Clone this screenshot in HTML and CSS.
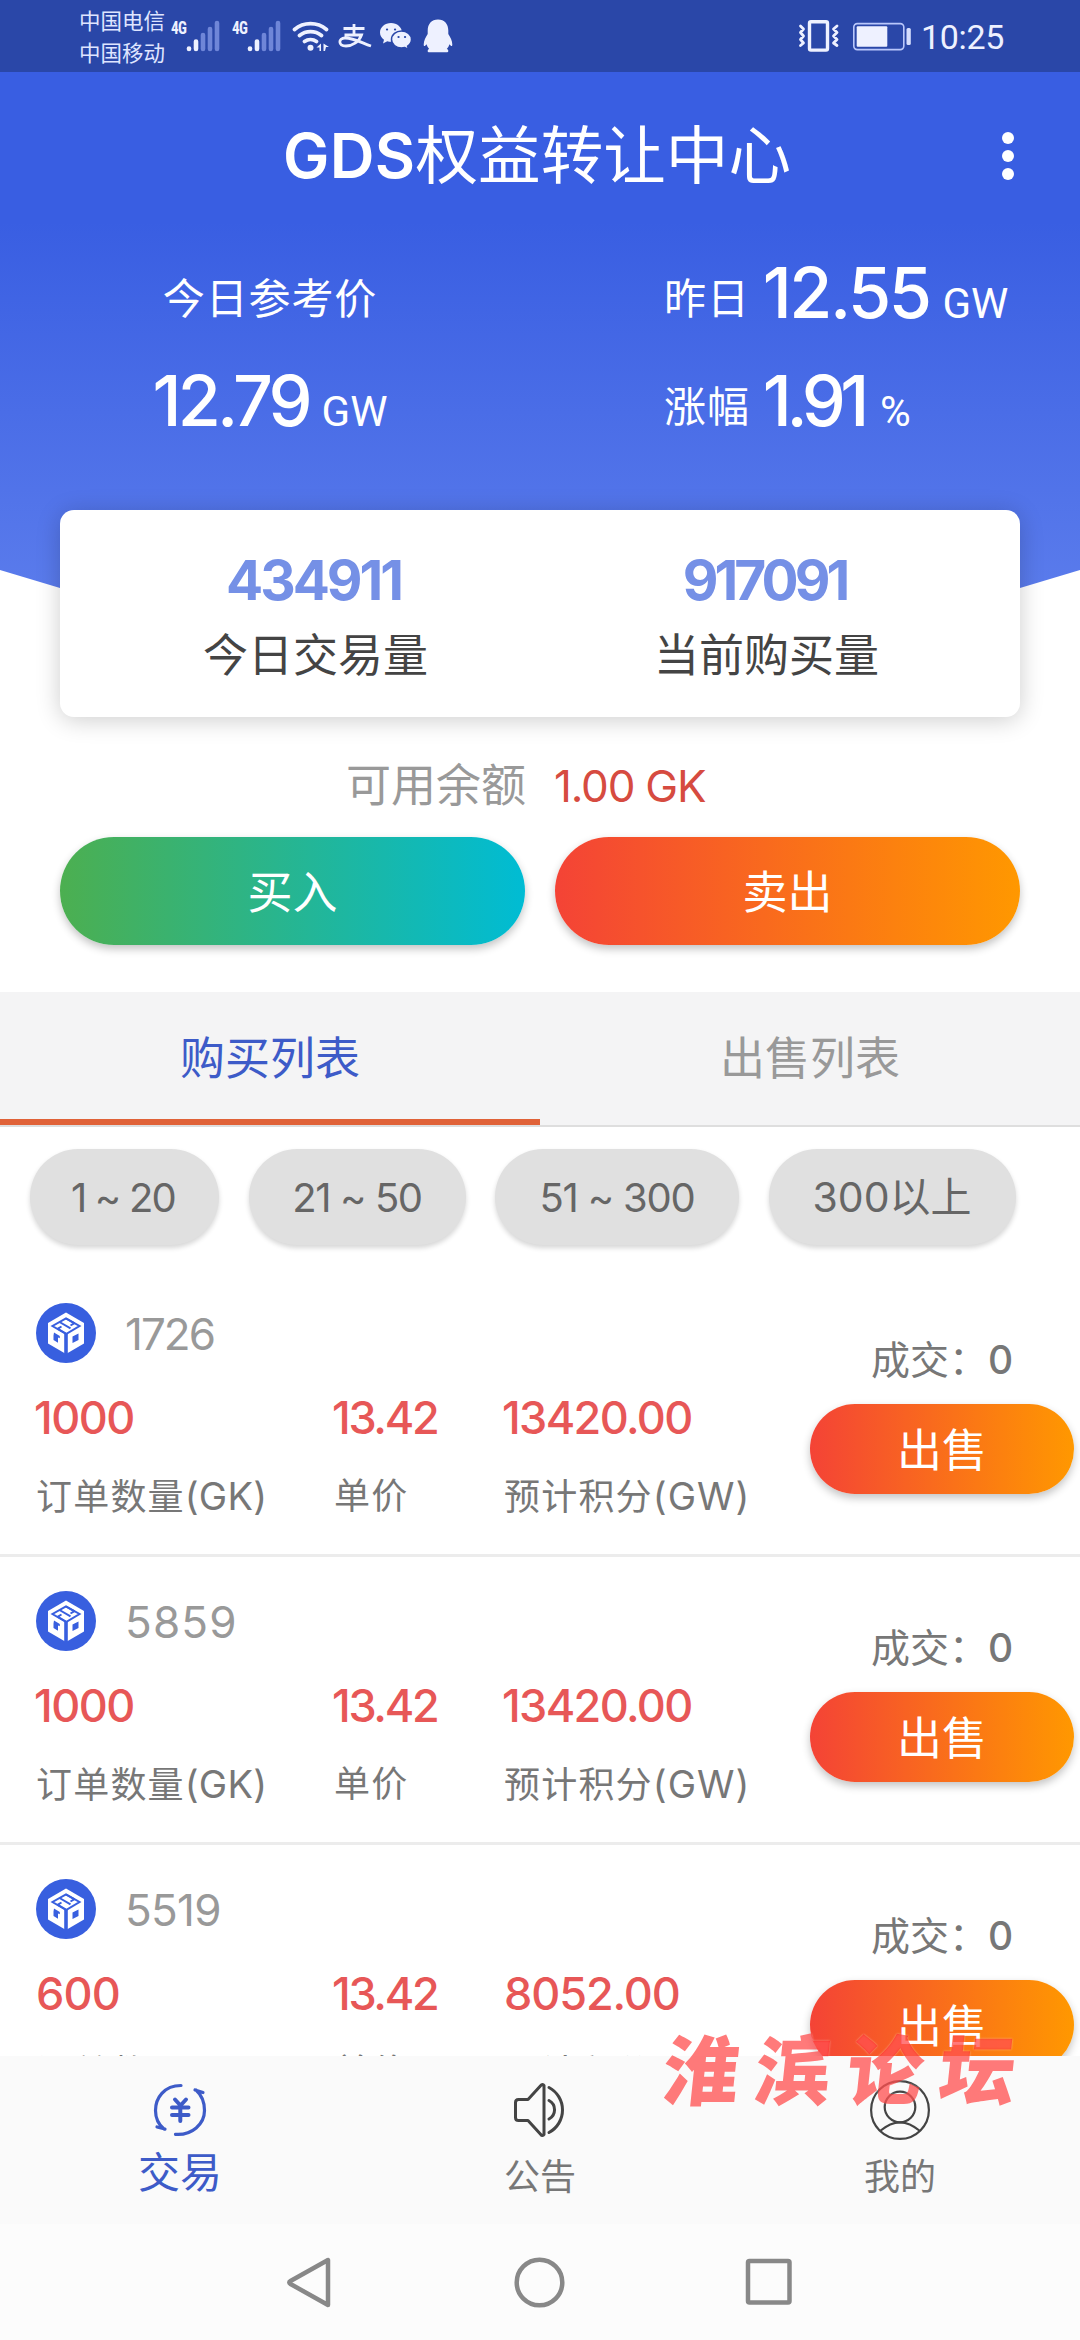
FILE: index.html
```html
<!DOCTYPE html>
<html lang="zh-CN">
<head>
<meta charset="utf-8">
<title>GDS权益转让中心</title>
<link rel="stylesheet" href="styles.css">
</head>
<body>
<svg class="defs" width="0" height="0">
  <symbol id="logo" viewBox="0 0 60 60">
    <circle cx="30" cy="30" r="30" fill="#385fdf"/>
    <path d="M30 9.500 48 20V40.500L30 51 12 40.500V20Z" fill="#fff"/>
    <g fill="none" stroke="#385fdf" stroke-width="2">
      <path d="M30 31 16.500 23 30 15.300 43.500 23Z"/>
      <path d="M23.500 19l11 6.300M25.500 23.500l-4 2.300M34.500 22.500l4-2.300M30 15.500l8.500 4.800M30 30.500l-8.500-4.800"/>
      <path d="M30 31V51" stroke-width="3.600"/>
    </g>
    <path d="M18 29.500 23.800 33v2.200l-1.800-.8v5.300L17.500 37v-4.500ZM36.500 33.500l6-3v6.500l-6 3Z" fill="#385fdf"/>
  </symbol>
</svg>

<div class="screen">
  <div class="statusbar">
    <div class="carriers"><div>中国电信</div><div>中国移动</div></div>
    <div class="signal"><span>4G</span>
      <svg width="36" height="72" viewBox="0 0 36 72" stroke="#eef1ff" stroke-width="4.600" stroke-linecap="round"><path d="M3 48.500v.5M10 41.500v7.500"/><path d="M17 35v14M24 29v20M31 23v26" stroke="#6f86d8"/></svg>
    </div>
    <div class="signal"><span>4G</span>
      <svg width="36" height="72" viewBox="0 0 36 72" stroke="#eef1ff" stroke-width="4.600" stroke-linecap="round"><path d="M3 48.500v.5M10 41.500v7.500"/><path d="M17 35v14M24 29v20M31 23v26" stroke="#6f86d8"/></svg>
    </div>
    <svg class="wifi" width="38" height="72" viewBox="291 0 38 72" fill="none" stroke="#eef1ff" stroke-width="3.700" stroke-linecap="round">
      <path d="M293.500 29.500A25 25 0 0 1 325.500 29.500M298.500 35.500A17.500 17.500 0 0 1 320.500 35.500M303.500 41.500A10 10 0 0 1 315.500 41.500"/>
      <circle cx="309.500" cy="47.800" r="3" fill="#eef1ff" stroke="none"/>
      <path d="M315.500 47.500l4.500-4v7.500h-1.500v-3.500ZM322.500 43.500l5.500 3.500h-3l-1 4h-1.500Z" fill="#eef1ff" stroke="none"/>
    </svg>
    <svg class="alipay" width="34" height="72" viewBox="337 0 34 72" fill="none" stroke="#eef1ff" stroke-width="2.800">
      <path d="M342.500 28.500h21M353 24v10.500M343.500 35h17C358 42 351 46 345 46c-8 0-8-8-1-8 9 0 17 5 26 8"/>
    </svg>
    <svg class="wechat" width="32" height="72" viewBox="379 0 32 72">
      <path fill="#eef1ff" d="M390 23c-6 0-11 4.200-11 9.500 0 3 1.500 5.500 4 7.300l-1 3.700 4.300-2.200c1.200.4 2.500.5 3.700.5 6 0 11-4 11-9.300S396 23 390 23Z"/>
      <path fill="#eef1ff" stroke="#2a47a8" stroke-width="1.500" d="M400.500 31c-5.400 0-10 3.700-10 8.500s4.500 8.500 10 8.500c1.200 0 2.300-.2 3.300-.5l3.700 1.900-.9-3.200c2.400-1.600 3.900-4 3.900-6.700 0-4.800-4.600-8.500-10-8.500Z"/>
      <path stroke="#2a47a8" stroke-width="2.200" stroke-linecap="round" d="M386 29.500h.1M394 29.500h.1M397.500 37h.1M404 37h.1"/>
    </svg>
    <svg class="qq" width="30" height="72" viewBox="422 0 30 72" fill="#eef1ff">
      <path d="M437 19.500c-6.500 0-10.300 4.500-10.300 11v3.500c-2 3-4 7-4 10.500 0 2 1.200 2.200 2.800-.2.500 1.800 1.400 3.300 2.700 4.600-2 .8-2.200 3.300.3 3.300h17c2.500 0 2.300-2.500.3-3.300 1.300-1.300 2.200-2.800 2.700-4.600 1.600 2.400 2.800 2.200 2.800.2 0-3.500-2-7.500-4-10.500v-3.500c0-6.500-3.800-11-10.300-11Z"/>
    </svg>
    <span class="spacer"></span>
    <svg width="42" height="72" viewBox="797 0 42 72" fill="none" stroke="#eef1ff" stroke-width="3.400" stroke-linejoin="round" stroke-linecap="round">
      <rect x="808.500" y="21.700" width="18" height="28.400" rx="1.500"/>
      <path stroke-width="2.800" d="M799.500 26l3 3-3 3.500 3 3.500-3 3.500 3 3.500-3 2.500M836 26l-3.500 3 3.500 3.500-3.500 3.500 3.500 3.500-3.500 3.500 3.500 2.500"/>
    </svg>
    <svg class="battery" width="60" height="72" viewBox="851 0 60 72">
      <rect x="852.800" y="23.600" width="50" height="26" rx="3.500" fill="none" stroke="#b9c7fb" stroke-width="1.600"/>
      <rect x="855.700" y="26.300" width="30.600" height="20.400" rx="1" fill="#eef1ff"/>
      <rect x="905.500" y="28" width="4.300" height="17" rx="1.500" fill="#d5ddfd"/>
    </svg>
    <span class="clock">10:25</span>
  </div>

  <main class="content">
    <section class="hero">
      <header class="titlebar">
        <h1><span class="gds">GDS</span>权益转让中心</h1>
        <svg class="more" width="12" height="48" viewBox="0 0 12 48" fill="#fff"><circle cx="6" cy="6" r="6"/><circle cx="6" cy="24" r="6"/><circle cx="6" cy="42" r="6"/></svg>
      </header>
      <div class="prices">
        <div class="today">
          <div class="line"><span class="cap">今日参考价</span></div>
          <div class="line"><span class="big k29">12.79</span><span class="unit">GW</span></div>
        </div>
        <div class="yesterday">
          <div class="line"><span class="cap">昨日</span><span class="big k19">12.55</span><span class="unit">GW</span></div>
          <div class="line"><span class="cap">涨幅</span><span class="big k49">1.91</span><span class="unit pct">%</span></div>
        </div>
      </div>
      <div class="card">
        <div class="stat"><b class="k27">434911</b><span>今日交易量</span></div>
        <div class="stat"><b class="k35">917091</b><span>当前购买量</span></div>
      </div>
    </section>

    <div class="balance"><span>可用余额</span><span class="amount">1.00 GK</span></div>
    <div class="actions"><div class="btn buy">买入</div><div class="btn sell">卖出</div></div>

    <nav class="tabs"><div class="tab active">购买列表</div><div class="tab">出售列表</div></nav>

    <div class="chips">
      <div class="chip c1">1 ~ 20</div><div class="chip c2">21 ~ 50</div><div class="chip c3">51 ~ 300</div><div class="chip c4">300以上</div>
    </div>

    <div class="list">
      <article class="row">
        <div class="info">
          <div class="user"><svg width="60" height="60"><use href="#logo"/></svg><span class="k15">1726</span></div>
          <div class="figures">
            <div class="col"><b>1000</b><span>订单数量<i class="gk">(GK)</i></span></div>
            <div class="col"><b class="k20">13.42</b><span>单价</span></div>
            <div class="col"><b class="k14">13420.00</b><span>预计积分<i class="gw">(GW)</i></span></div>
          </div>
        </div>
        <div class="deal"><div class="done">成交：<em>0</em></div><div class="btn sell small">出售</div></div>
      </article>
      <article class="row">
        <div class="info">
          <div class="user"><svg width="60" height="60"><use href="#logo"/></svg><span class="w1">5859</span></div>
          <div class="figures">
            <div class="col"><b>1000</b><span>订单数量<i class="gk">(GK)</i></span></div>
            <div class="col"><b class="k20">13.42</b><span>单价</span></div>
            <div class="col"><b class="k14">13420.00</b><span>预计积分<i class="gw">(GW)</i></span></div>
          </div>
        </div>
        <div class="deal"><div class="done">成交：<em>0</em></div><div class="btn sell small">出售</div></div>
      </article>
      <article class="row">
        <div class="info">
          <div class="user"><svg width="60" height="60"><use href="#logo"/></svg><span class="k7">5519</span></div>
          <div class="figures">
            <div class="col"><b class="k0">600</b><span>订单数量<i class="gk">(GK)</i></span></div>
            <div class="col"><b class="k20">13.42</b><span>单价</span></div>
            <div class="col"><b class="k5">8052.00</b><span>预计积分<i class="gw">(GW)</i></span></div>
          </div>
        </div>
        <div class="deal"><div class="done">成交：<em>0</em></div><div class="btn sell small">出售</div></div>
      </article>
    </div>
  </main>

  <nav class="bottom">
    <div class="item on">
      <svg width="60" height="60" viewBox="0 0 60 60" fill="none" stroke="#3d5bc8" stroke-width="3.200" stroke-linecap="round" stroke-linejoin="round">
        <path d="M31 5.500C14 5.500 5.500 18 5.500 30.500c0 7 3 14 8.500 18.500M7 47l8 2"/>
        <path d="M25.500 54.300C42 55.500 54.500 44 54.500 30.500c0-8-3.500-16-8.500-20.500M53 12.500l-8-2.500"/>
        <path stroke-width="4" d="M25 19.500l5.500 6 5.500-6M22 27.500h16.500M22 35h16.500M30.300 26v15"/>
      </svg>
      <span>交易</span>
    </div>
    <div class="item">
      <svg width="60" height="60" viewBox="0 0 60 60" fill="none" stroke="#444" stroke-width="3" stroke-linecap="round" stroke-linejoin="round">
        <path d="M34 5.500c-.8-1.400-2.300-1.200-3.200 0L18 19.500H8.500q-3 0-3 3v15q0 3 3 3H18L30.800 54.500c.9 1.200 2.400 1.400 3.200 0Z"/>
        <path d="M39 7.500A25.500 25.500 0 0 1 39 52.500M39 20.500A10.500 10.500 0 0 1 39 39"/>
      </svg>
      <span>公告</span>
    </div>
    <div class="item">
      <svg width="60" height="60" viewBox="0 0 60 60" fill="none" stroke="#444" stroke-width="2.200">
        <circle cx="30" cy="30" r="28.900"/><circle cx="30" cy="27" r="15.300"/><path d="M10 51c6-5 12-8.700 20-8.700S44 46 50 51"/>
      </svg>
      <span>我的</span>
    </div>
  </nav>
  <div class="sysnav">
    <svg width="51" height="51" viewBox="0 0 51 51"><path d="M45 3v45L7.500 27q-2.500-1.500 0-3L45 3Z"/></svg>
    <svg width="51" height="51" viewBox="0 0 51 51"><circle cx="25.500" cy="25.500" r="22.800"/></svg>
    <svg width="51" height="51" viewBox="0 0 51 51"><rect x="4" y="4" width="41.500" height="41.500" rx="1.500"/></svg>
  </div>
  <div class="watermark"><span>淮</span><span>滨</span><span>论</span><span>坛</span></div>
</div>
</body>
</html>
```

FILE: styles.css
```css
* { box-sizing: border-box; }
body { margin: 0; background: #fff; font-family: Inter, "Noto Sans CJK SC", sans-serif; }
h1 { margin: 0; font-weight: 400; }
b, i, em { font-style: normal; }
svg { display: block; flex: none; }
.defs { position: absolute; }
.screen { position: relative; width: 1080px; height: 2340px; overflow: hidden; display: flex; flex-direction: column; }

.statusbar { height: 72px; flex: none; background: #2a47a8; display: flex; color: #eef1ff; padding: 0 76px 0 79px; }
.carriers { width: 92px; padding-top: 6px; font-size: 21.5px; line-height: 31.500px; white-space: nowrap; color: #dfe5ff; }
.signal { width: 61px; display: flex; }
.signal span { width: 15px; font: 700 19px/55px "Roboto Condensed", Roboto, sans-serif; letter-spacing: -1px; transform: scaleX(.8); transform-origin: left; white-space: nowrap; }
.wifi { margin-left: -1px; }
.alipay { margin-left: 8px; }
.wechat { margin-left: 8px; }
.qq { margin-left: 11px; }
.spacer { flex: 1; }
.battery { margin-left: 12px; }
.clock { margin-left: 9px; width: 83px; font: 400 34px/74px Roboto, sans-serif; white-space: nowrap; letter-spacing: -.3px; }

.content { height: 1984px; flex: none; overflow: hidden; }
.hero { position: relative; color: #fff; isolation: isolate; }
.hero::before {
  content: ""; position: absolute; z-index: -1; inset: 0;
  background: linear-gradient(#395ee2 0, #395ee2 150px, #5b7cec 530px);
  clip-path: polygon(0 0, 100% 0, 100% 498px, 1020px 516px, 540px 630px, 60px 516px, 0 498px);
}
.titlebar { height: 167px; display: flex; align-items: center; padding: 0 66px 0 283px; justify-content: space-between; }
.titlebar h1 { font-size: 62.600px; line-height: 90px; white-space: nowrap; }
.gds { font-size: 62px; font-weight: 600; letter-spacing: .3px; }
.prices { display: flex; }
.today { width: 540px; text-align: center; }
.yesterday { padding-left: 124px; }
.line { height: 108px; font-size: 70px; line-height: 108px; white-space: nowrap; }
.cap { font-size: 42px; letter-spacing: .9px; line-height: 1; vertical-align: 4px; }
.big { font-size: 70px; line-height: 1; font-weight: 450; }
.cap + .big { margin-left: 13px; }
.unit { font-family: Roboto, sans-serif; font-size: 42px; line-height: 1; margin-left: 13px; }
.pct { margin-left: 16px; }
.k19 { letter-spacing: -2.500px; }
.k29 { letter-spacing: -3.900px; }
.k49 { letter-spacing: -5.400px; }
.k27 { letter-spacing: -3px; }
.k35 { letter-spacing: -3.900px; }

.card {
  margin: 55px 60px 0; height: 207px; background: #fff; border-radius: 14px;
  padding: 37px 141px 0 143px; display: flex; justify-content: space-between;
  box-shadow: 0 3px 24px rgba(0, 0, 0, .2);
}
.stat { width: 225px; text-align: center; display: flex; flex-direction: column; gap: 13px; white-space: nowrap; }
.stat b { font-size: 55px; line-height: 66px; font-weight: 700; color: #7590e6; margin-left: -4px; }
.stat span { font-size: 45px; line-height: 60px; color: #444; }

.balance { margin-top: 39px; padding-left: 346px; display: flex; gap: 27px; font-size: 45px; line-height: 60px; color: #999; white-space: nowrap; }
.amount { font-size: 44px; color: #d64b40; letter-spacing: -1.200px; margin-left: 1px; }
.actions { margin: 21px 60px 0; display: flex; gap: 30px; }
.btn { flex: 1; height: 108px; border-radius: 54px; color: #fff; font-size: 45px; line-height: 112px; text-align: center; box-shadow: 0 4px 8px rgba(0, 0, 0, .24); }
.buy { background: linear-gradient(90deg, #4caf50, #00bcd4); }
.sell { background: linear-gradient(90deg, #f44336, #ff9800); }

.tabs { margin-top: 47px; height: 133px; display: flex; background: #f4f4f5; box-shadow: 0 2px 0 #dedede; }
.tab { flex: 1; text-align: center; font-size: 45px; line-height: 133px; color: #999; }
.tab.active { color: #3d5bc8; border-bottom: 6px solid #e06238; }

.chips { margin-top: 24px; padding-left: 30px; display: flex; gap: 29.500px; }
.chip { height: 96px; border-radius: 48px; background: #e0e0e0; color: #666; font-size: 40px; line-height: 97px; text-align: center; white-space: pre; box-shadow: 0 3px 5px rgba(0, 0, 0, .16); }
.c1 { width: 189px; letter-spacing: -1.800px; padding-right: 3px; }
.c2 { width: 217px; letter-spacing: -1.400px; }
.c3 { width: 244px; letter-spacing: -1.200px; }
.c4 { width: 247px; font-size: 41px; }

.list { margin-top: 24px; }
.row { height: 288px; display: flex; border-bottom: 3px solid #ececec; padding: 34px 6px 0 36px; white-space: nowrap; }
.info { flex: 1; }
.user { display: flex; gap: 29px; font-size: 44px; line-height: 62px; color: #999; height: 60px; }
.figures { display: grid; grid-template-columns: 298px 170px 1fr; margin-top: 25px; }
.col { display: flex; flex-direction: column; gap: 23px; }
.col b { font-size: 45px; line-height: 60px; font-weight: 500; color: #e75757; letter-spacing: -1.500px; margin-left: -2px; }
.col span { font-size: 36px; line-height: 50px; letter-spacing: 1.200px; color: #777; }
.k15 { letter-spacing: -2px; }
.w1 { letter-spacing: 1.200px; }
.k7 { letter-spacing: -.7px; }
.col .k20 { letter-spacing: -2.300px; }
.col .k14 { letter-spacing: -1.600px; }
.col .k0 { letter-spacing: -.8px; margin-left: 0; }
.col .k5 { letter-spacing: -1.100px; margin-left: 0; }
.gk, .gw { font-size: 38px; }
.gk { letter-spacing: .2px; }
.gw { letter-spacing: 1px; }
.deal { width: 264px; padding-top: 27px; }
.done { text-align: center; font-size: 39px; line-height: 60px; color: #777; }
.done em { font-weight: 500; }
.small { margin-top: 14px; height: 90px; border-radius: 45px; line-height: 94px; }

.bottom { height: 168px; flex: none; background: #fafafa; display: flex; }
.item { flex: 1; display: flex; flex-direction: column; align-items: center; padding-top: 24px; font-size: 36px; color: #777; }
.item span { line-height: 50px; margin-top: 12px; }
.item.on span { font-size: 42px; color: #3d5bc8; line-height: 54px; margin-top: 6px; }
.sysnav { height: 116px; flex: none; background: #fcfcfc; display: flex; align-items: center; justify-content: space-between; padding: 0 285px 0 283px; }
.sysnav svg { fill: none; stroke: #888; stroke-width: 4.500; stroke-linejoin: round; }

.watermark {
  position: absolute; left: 664px; top: 2010px; display: flex; gap: 16px;
  font: 900 76px/112px "Noto Sans CJK SC", sans-serif; color: rgba(255, 0, 0, .52);
  text-shadow: 0 0 2px rgba(255, 255, 255, .5); transform: skewX(-6deg);
}
```
